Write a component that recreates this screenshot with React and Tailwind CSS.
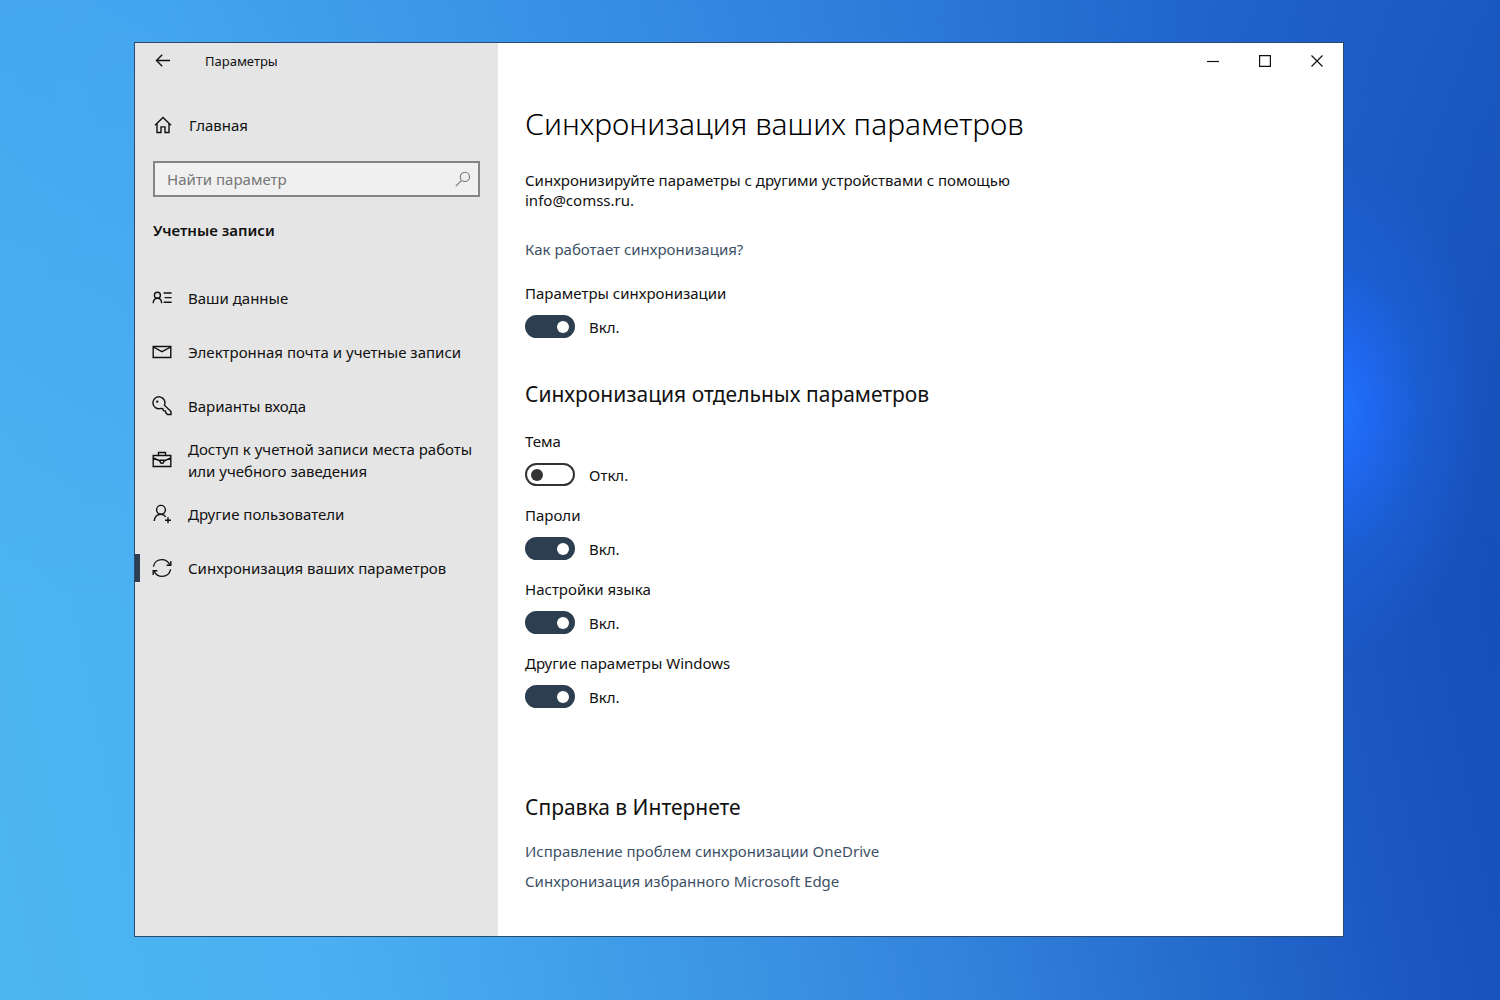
import { useState } from "react";

const NAV_ITEMS = [
  { id: "info", label: "Ваши данные", icon: InfoIcon },
  { id: "email", label: "Электронная почта и учетные записи", icon: MailIcon },
  { id: "signin", label: "Варианты входа", icon: KeyIcon },
  {
    id: "work",
    label: "Доступ к учетной записи места работы или учебного заведения",
    icon: BriefcaseIcon,
  },
  { id: "users", label: "Другие пользователи", icon: AddUserIcon },
  { id: "sync", label: "Синхронизация ваших параметров", icon: SyncIcon },
];

const SYNC_OPTIONS = [
  { id: "theme", label: "Тема", on: false },
  { id: "passwords", label: "Пароли", on: true },
  { id: "language", label: "Настройки языка", on: true },
  { id: "other", label: "Другие параметры Windows", on: true },
];

function Icon({ children, className = "size-5" }) {
  return (
    <svg
      viewBox="0 0 20 20"
      className={`shrink-0 ${className}`}
      fill="none"
      stroke="currentColor"
      strokeWidth="1.4"
      aria-hidden="true"
    >
      {children}
    </svg>
  );
}

function BackIcon() {
  return (
    <Icon>
      <path d="M17 9.500H3.600M9.200 3.800 3.500 9.500l5.700 5.700" />
    </Icon>
  );
}

function HomeIcon() {
  return (
    <Icon>
      <path d="M2 10.200 10 2.400l8 7.800M4 8.600v8.900h4v-5.600h4v5.600h4V8.600" />
    </Icon>
  );
}

function SearchIcon() {
  return (
    <Icon className="size-4">
      <circle cx="12.400" cy="7.400" r="5.800" />
      <path d="M8.200 11.600 1 18.800" />
    </Icon>
  );
}

function InfoIcon() {
  return (
    <Icon>
      <circle cx="5.400" cy="7.200" r="3" />
      <path d="M1.200 15.200c0-3 1.800-5 4.200-5s4.200 2 4.200 5M11.600 5h8M12.600 9.600h7M11.600 14.200h8" />
    </Icon>
  );
}

function MailIcon() {
  return (
    <Icon>
      <path d="M1.200 4.500h17.600v11H1.200zM1.200 5l8.800 4.600L18.800 5" />
    </Icon>
  );
}

function KeyIcon() {
  return (
    <Icon>
      <path d="M12.400 9.200a6 6 0 1 0-3.400 3.200l1.800.2.600 2 2 .2.400 2 1.800 1.700h3.400v-2.900z" />
      <circle cx="5.200" cy="5.600" r="1.200" fill="currentColor" stroke="none" />
    </Icon>
  );
}

function BriefcaseIcon() {
  return (
    <Icon>
      <path d="M1.200 5.500h17.600v11H1.200zM6.500 5.500v-3h7v3M1.200 8l7 3M18.800 8l-7 3" />
      <path d="M8.200 10.200v1.200a1.800 1.800 0 0 0 3.600 0v-1.200z" />
    </Icon>
  );
}

function AddUserIcon() {
  return (
    <Icon>
      <circle cx="9" cy="5.800" r="4.400" />
      <path d="M2.200 17c.4-4 3-6.800 6.600-6.800 2.200 0 3.800 1 5 2.600M16 13.200v6M13 16.200h6" />
    </Icon>
  );
}

function SyncIcon() {
  return (
    <Icon>
      <path d="M1.400 8.600C2.200 4.400 5.600 1.600 9.800 1.600c3.600 0 6.600 2 8 5.200M18.600 11.400c-.8 4.200-4.200 7-8.400 7-3.600 0-6.600-2-8-5.200" />
      <path d="M18.800 3v4.200h-4.200M1.200 17v-4.200h4.200" />
    </Icon>
  );
}

function WindowButton({ label, children }) {
  return (
    <button
      type="button"
      aria-label={label}
      className="flex h-9 w-[52px] items-center justify-center hover:bg-gray-200"
    >
      <svg
        viewBox="0 0 12 12"
        className="size-3"
        fill="none"
        stroke="currentColor"
        strokeWidth="1.2"
        aria-hidden="true"
      >
        {children}
      </svg>
    </button>
  );
}

function Toggle({ id, label, on, onChange }) {
  return (
    <div>
      <label htmlFor={id} className="block">
        {label}
      </label>
      <div className="mt-3 flex items-center gap-3.5">
        <input
          id={id}
          type="checkbox"
          role="switch"
          checked={on}
          onChange={(e) => onChange(e.target.checked)}
          className="flex h-[23px] w-[50px] appearance-none items-center rounded-full border-2 border-[#333333] bg-white px-1 before:size-3 before:rounded-full before:bg-[#333333] checked:justify-end checked:border-[#2c3e50] checked:bg-[#2c3e50] checked:before:bg-white"
        />
        <span>{on ? "Вкл." : "Откл."}</span>
      </div>
    </div>
  );
}

function Sidebar({ active, onSelect }) {
  return (
    <aside className="w-[363px] shrink-0 bg-[#e5e5e5]">
      <div className="flex h-9 items-center gap-8 pl-[18px]">
        <button type="button" aria-label="Назад">
          <BackIcon />
        </button>
        <span className="text-[13px]">Параметры</span>
      </div>

      <div className="px-[18px]">
        <a href="#home" className="mt-9 flex items-center gap-4">
          <HomeIcon />
          <span>Главная</span>
        </a>

        <div className="mt-[26px] flex h-9 items-center border-2 border-[#858585] bg-[#f0f0f0] pr-[7px] text-[#767676]">
          <input
            type="search"
            aria-label="Найти параметр"
            placeholder="Найти параметр"
            className="min-w-0 flex-1 bg-transparent pl-3 outline-none placeholder:text-[#767676]"
          />
          <SearchIcon />
        </div>

        <h2 className="mt-[23px] font-semibold">Учетные записи</h2>
      </div>

      <nav className="mt-[31px]">
        {NAV_ITEMS.map(({ id, label, icon: ItemIcon }) => (
          <a
            key={id}
            href={`#${id}`}
            onClick={() => onSelect(id)}
            className="flex h-[54px] items-center"
          >
            <span className={`h-7 w-[5px] ${active === id ? "bg-[#2c3e50]" : ""}`} />
            <span className="flex flex-1 items-center gap-4 pr-4 pl-3 leading-[22px]">
              <ItemIcon />
              {label}
            </span>
          </a>
        ))}
      </nav>
    </aside>
  );
}

// Desktop wallpaper: a glow at the right edge of the window over a tilted blue sweep
const WALLPAPER =
  "bg-[radial-gradient(ellipse_150px_250px_at_89%_41%,#2272ff_0%,#1f69f4d9_28%,#1d62e080_58%,#1c5cd000_100%),linear-gradient(180deg,#2f86e840_0%,#2f86e800_60%),linear-gradient(79deg,#4db5f1_0%,#4ab0f2_20%,#409fe9_35%,#3a90e2_47%,#3080da_59%,#256ccd_71%,#1b58c2_83%,#1249b3_100%)]";

export default function App() {
  const [active, setActive] = useState("sync");
  const [syncOn, setSyncOn] = useState(true);
  const [options, setOptions] = useState(SYNC_OPTIONS);

  const setOption = (id, on) => {
    setOptions(options.map((o) => (o.id === id ? { ...o, on } : o)));
  };

  return (
    <div
      className={`flex min-h-screen pt-[42px] pr-[156px] pb-[63px] pl-[134px] font-['Noto_Sans',sans-serif] text-[15px] leading-5 text-[#111111] ${WALLPAPER}`}
    >
      <div className="flex flex-1 border border-[#2b4a6f] bg-white">
        <Sidebar active={active} onSelect={setActive} />

        <div className="min-w-0 flex-1">
          <div className="flex justify-end">
            <WindowButton label="Свернуть">
              <path d="M0 6.500h12" />
            </WindowButton>
            <WindowButton label="Развернуть">
              <path d="M.6.6h10.800v10.800H.6z" />
            </WindowButton>
            <WindowButton label="Закрыть">
              <path d="m.5.5 11 11M11.500.5l-11 11" />
            </WindowButton>
          </div>

          <main className="px-[27px] pt-[25px] pb-11">
            <h1 className="text-[30px] leading-10 font-light text-black">
              Синхронизация ваших параметров
            </h1>
            <p className="mt-[26px] max-w-[520px]">
              Синхронизируйте параметры с другими устройствами с помощью info@comss.ru.
            </p>
            <p className="mt-[29px] mb-6">
              <a href="#how" className="text-[#3d5166]">
                Как работает синхронизация?
              </a>
            </p>
            <Toggle id="sync-all" label="Параметры синхронизации" on={syncOn} onChange={setSyncOn} />

            <h2 className="mt-10 text-[21px] leading-8">Синхронизация отдельных параметров</h2>
            <div className="mt-[21px] flex flex-col gap-[19px]">
              {options.map((o) => (
                <Toggle
                  key={o.id}
                  id={o.id}
                  label={o.label}
                  on={o.on}
                  onChange={(on) => setOption(o.id, on)}
                />
              ))}
            </div>

            <h2 className="mt-[83px] text-[21px] leading-8">Справка в Интернете</h2>
            <div className="mt-[18px] flex flex-col items-start gap-2.5 text-[#3d5166]">
              <a href="#onedrive">Исправление проблем синхронизации OneDrive</a>
              <a href="#edge">Синхронизация избранного Microsoft Edge</a>
            </div>
          </main>
        </div>
      </div>
    </div>
  );
}
